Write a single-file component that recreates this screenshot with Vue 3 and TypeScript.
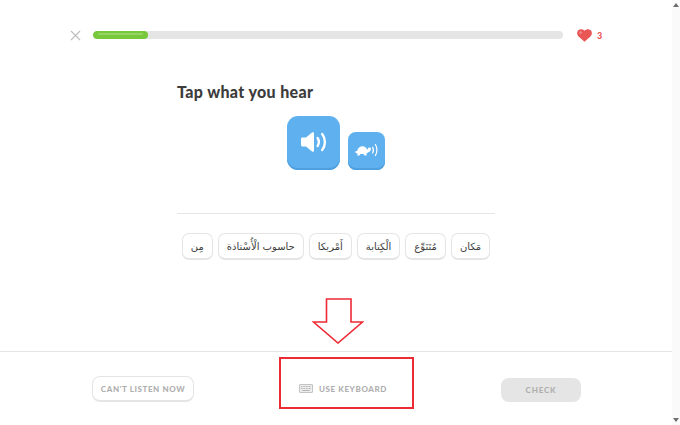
<script setup lang="ts">
const words: string[] = ['مَكان', 'مُتَنَوِّع', 'الْكِتابة', 'أَمْريكا', 'حاسوب الْأُسْتاذة', 'مِن']
</script>

<template>
  <div class="page">
    <div class="content">
      <header class="top">
        <svg class="close" width="11" height="11" viewBox="0 0 11 11">
          <path d="M1 1 L10 10 M10 1 L1 10" stroke="#bdbdbd" stroke-width="1.2" fill="none" />
        </svg>
        <div class="track"><div class="fill"><div class="shine"></div></div></div>
        <svg class="heart" width="15" height="13" viewBox="0 0 15 13">
          <path d="M7.5 12.8 L1.3 7.2 C-0.4 5.4 -0.2 2.4 1.5 1 C3.3 -0.3 6 0 7.5 1.7 C9 0 11.7 -0.3 13.5 1 C15.2 2.4 15.4 5.4 13.7 7.2 Z" fill="#e85656" />
          <circle cx="3.6" cy="3.6" r="1.3" fill="#f08a8a" />
        </svg>
        <span class="lives">3</span>
      </header>

      <main class="main">
        <h1 class="title">Tap what you hear</h1>
        <div class="audio">
          <button class="audio-btn big">
            <svg width="26" height="20" viewBox="0 0 26 20">
              <path d="M0 7 C0 6.2 0.6 5.6 1.4 5.6 L5 5.6 L11 0.5 C11.8 -0.2 13 0.3 13 1.4 L13 18.6 C13 19.7 11.8 20.2 11 19.5 L5 14.4 L1.4 14.4 C0.6 14.4 0 13.8 0 13 Z" fill="#fff" />
              <path d="M16.6 6 C18 8.2 18 11.8 16.6 14" stroke="#fff" stroke-width="2.4" stroke-linecap="round" fill="none" />
              <path d="M21.2 2 C24.8 6.6 24.8 13.4 21.2 18" stroke="#fff" stroke-width="2.4" stroke-linecap="round" fill="none" />
            </svg>
          </button>
          <button class="audio-btn small">
            <svg width="23" height="14" viewBox="0 0 23 14">
              <path d="M0 8.8 C0.6 8.2 1.4 8 2.1 7.9 C2.8 5 5 3.3 7.5 3.3 C9.8 3.3 11.5 4.8 12.1 6.8 L12.6 6.2 C13 4.6 14.3 4.1 15.2 4.6 C16.3 5.2 16.2 7 15.3 8 C14.6 8.8 13.6 9.3 12.7 9.4 C12.4 10.2 11.8 10.7 11.1 10.8 L12 12.4 L9.4 12.4 L8.6 10.9 L5.4 10.9 L4.6 12.4 L2 12.4 L2.8 10.7 C1.6 10.5 0.3 9.9 0 8.8 Z" fill="#fff" />
              <path d="M17.6 4.2 C18.7 6 18.7 8.2 17.6 10" stroke="#fff" stroke-width="1.2" stroke-linecap="round" fill="none" />
              <path d="M20.4 1.5 C22.4 4.6 22.4 9.4 20.4 12.5" stroke="#fff" stroke-width="1.2" stroke-linecap="round" fill="none" />
            </svg>
          </button>
        </div>
        <div class="divider"></div>
        <div class="chips" dir="rtl">
          <button v-for="w in words" :key="w" class="chip" lang="ar">{{ w }}</button>
        </div>
      </main>

      <footer class="bottom">
        <button class="skip">CAN'T LISTEN NOW</button>
        <div class="keyboard">
          <svg width="14" height="9" viewBox="0 0 14 9">
            <rect x="0.5" y="0.5" width="13" height="8" rx="0.5" fill="#ececec" stroke="#c4c4c4" />
            <path d="M2 2.5 H12 M2 4.5 H12" stroke="#b5b5b5" stroke-width="1" stroke-dasharray="1 0.6" />
            <path d="M3.5 6.5 H10.5" stroke="#b5b5b5" stroke-width="1" />
          </svg>
          <span>USE KEYBOARD</span>
        </div>
        <button class="check">CHECK</button>
      </footer>

      <svg class="callout arrow" width="52" height="47" viewBox="0 0 52 47">
        <path d="M14.5 2 H39 V25 H50.5 L26 46 L1.5 25 H14.5 Z" fill="#fff" stroke="#ee2a35" stroke-width="1.6" />
      </svg>
      <div class="callout frame"></div>
    </div>

    <div class="scrollbar">
      <span class="tri up"></span>
      <span class="tri down"></span>
    </div>
  </div>
</template>

<style>
html, body { margin: 0; background: #fff; overflow: hidden; }
</style>

<style scoped>
.page {
  display: flex;
  width: 680px;
  height: 425px;
  background: #fff;
  font-family: "Lato", "Liberation Sans", sans-serif;
  overflow: hidden;
}
.content {
  position: relative;
  flex: 1;
  min-width: 0;
  display: flex;
  flex-direction: column;
}
.top {
  display: flex;
  align-items: center;
  height: 24px;
  margin-top: 23px;
  padding-left: 70px;
}
.close { flex: none; }
.track {
  width: 470px;
  height: 8px;
  margin-left: 12px;
  border-radius: 4px;
  background: #e5e5e5;
  overflow: hidden;
}
.fill {
  width: 55px;
  height: 8px;
  border-radius: 4px;
  background: #78c83c;
  padding-top: 2px;
  box-sizing: border-box;
}
.shine {
  height: 2px;
  margin: 0 5px;
  border-radius: 1px;
  background: #94d565;
}
.heart { margin-left: 14px; }
.lives {
  margin-left: 5px;
  font-size: 9px;
  font-weight: 900;
  color: #e85656;
}
.main {
  width: 318px;
  margin-left: 177px;
  height: 304px;
  display: flex;
  flex-direction: column;
}
.title {
  margin: 34px 0 0;
  font-size: 16px;
  line-height: 22px;
  font-weight: 900;
  letter-spacing: 0.35px;
  color: #3c3c3c;
}
.audio {
  display: flex;
  align-items: flex-end;
  justify-content: center;
  gap: 8px;
  margin-top: 13px;
  height: 54px;
  box-sizing: border-box;
}
.audio-btn {
  display: flex;
  align-items: center;
  justify-content: center;
  padding: 0 0 2px;
  border: 0;
  background: #5eb0ef;
  box-shadow: inset 0 -2px 0 #4d9fdf;
}
.big { width: 53px; height: 54px; border-radius: 11px; }
.small { width: 37px; height: 38px; border-radius: 8px; }
.divider {
  height: 1px;
  margin-top: 43px;
  background: #e5e5e5;
}
.chips {
  display: flex;
  justify-content: center;
  gap: 5px;
  margin-top: 19px;
}
.chip {
  height: 27px;
  padding: 0 8px;
  box-sizing: border-box;
  border: 1px solid #e5e5e5;
  border-bottom-width: 2px;
  border-radius: 7px;
  background: #fff;
  color: #3c3c3c;
  font-family: "DejaVu Sans", "Noto Sans", sans-serif;
  font-size: 10px;
  white-space: nowrap;
}
.bottom {
  flex: 1;
  border-top: 1px solid #e5e5e5;
  display: flex;
  align-items: flex-start;
  padding-left: 92px;
}
.skip {
  width: 102px;
  height: 26px;
  margin-top: 24px;
  padding: 0;
  box-sizing: border-box;
  border: 1px solid #e5e5e5;
  border-bottom-width: 2px;
  border-radius: 8px;
  background: #fff;
  color: #afafaf;
  font-family: inherit;
  font-size: 8px;
  font-weight: 900;
  letter-spacing: 0.6px;
}
.keyboard {
  display: flex;
  align-items: center;
  gap: 6px;
  margin: 31px 0 0 105px;
  height: 11px;
  color: #afafaf;
  font-size: 8px;
  font-weight: 900;
  letter-spacing: 0.6px;
}
.check {
  width: 80px;
  height: 24px;
  margin: 26px 0 0 114px;
  padding: 0;
  border: 0;
  border-radius: 8px;
  background: #e5e5e5;
  color: #afafaf;
  font-family: inherit;
  font-size: 8px;
  font-weight: 900;
  letter-spacing: 0.8px;
}
.callout { position: absolute; }
.arrow { left: 312px; top: 297px; }
.frame {
  left: 279px;
  top: 357px;
  width: 131px;
  height: 48px;
  border: 2px solid #ee2a35;
}
.scrollbar {
  flex: none;
  width: 8px;
  background: #fafafa;
  display: flex;
  flex-direction: column;
  justify-content: space-between;
  align-items: center;
  padding: 3px 0;
  box-sizing: border-box;
}
.tri {
  width: 0;
  height: 0;
  border-left: 3px solid transparent;
  border-right: 3px solid transparent;
}
.up { border-bottom: 4px solid #6e6e6e; }
.down { border-top: 4px solid #6e6e6e; }
</style>
